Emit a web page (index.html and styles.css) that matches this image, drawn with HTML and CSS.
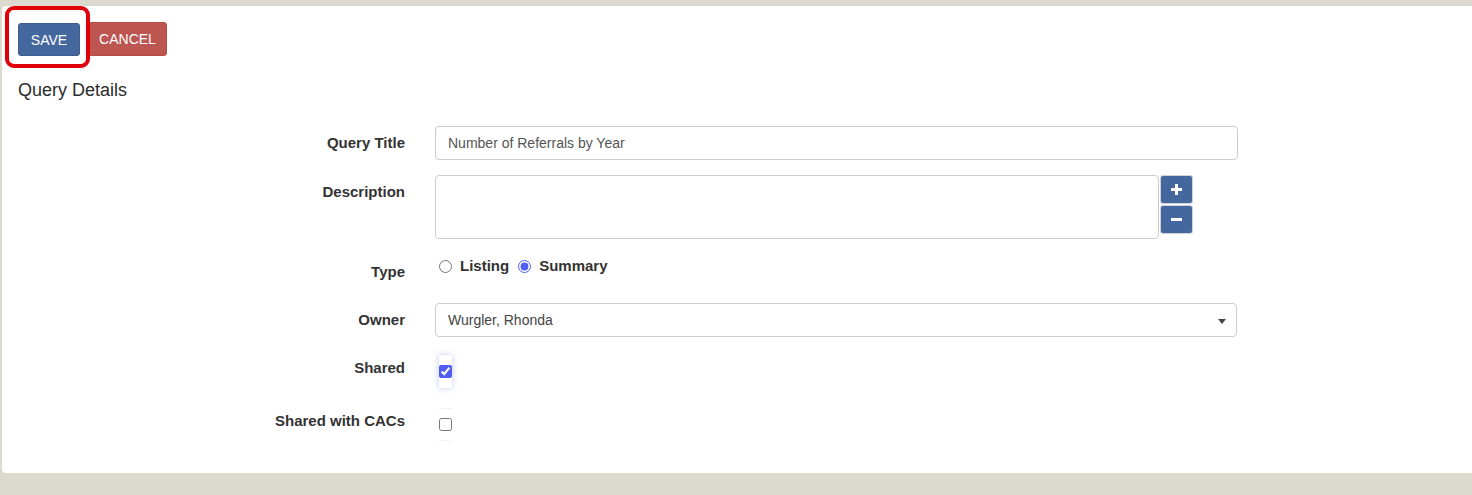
FILE: index.html
```html
<!DOCTYPE html>
<html>
<head>
<meta charset="utf-8">
<link rel="stylesheet" href="styles.css">
</head>
<body>
<div class="panel">
  <div class="toolbar">
    <button class="btn btn-save">SAVE</button>
    <button class="btn btn-cancel">CANCEL</button>
    <div class="highlight"></div>
  </div>
  <h2 class="section-title">Query Details</h2>
  <form class="form">
    <div class="row row-title">
      <label class="label">Query Title</label>
      <div class="field"><input class="input" type="text" value="Number of Referrals by Year"></div>
    </div>
    <div class="row row-desc">
      <label class="label">Description</label>
      <div class="field desc-field">
        <textarea class="textarea"></textarea>
        <div class="stepper">
          <button type="button" class="step">
            <svg width="11" height="11" viewBox="0 0 11 11"><path d="M4 0h3v4h4v3H7v4H4V7H0V4h4z" fill="#fff"/></svg>
          </button>
          <button type="button" class="step">
            <svg width="11" height="11" viewBox="0 0 11 11"><path d="M0 4h11v3H0z" fill="#fff"/></svg>
          </button>
        </div>
      </div>
    </div>
    <div class="row row-type">
      <label class="label">Type</label>
      <div class="field radios">
        <label class="radio"><input type="radio" name="t"> Listing</label>
        <label class="radio"><input type="radio" name="t" checked> Summary</label>
      </div>
    </div>
    <div class="row row-owner">
      <label class="label">Owner</label>
      <div class="field">
        <div class="select">Wurgler, Rhonda<span class="caret"></span></div>
      </div>
    </div>
    <div class="row row-shared">
      <label class="label">Shared</label>
      <div class="field">
        <div class="check-wrap focused"><input type="checkbox" class="check" checked></div>
      </div>
    </div>
    <div class="row row-cacs">
      <label class="label">Shared with CACs</label>
      <div class="field">
        <div class="check-wrap plain"><input type="checkbox" class="check"></div>
      </div>
    </div>
  </form>
</div>
</body>
</html>
```
FILE: styles.css
```css
* { box-sizing: border-box; }
html, body { margin: 0; padding: 0; }
body {
  background: #dcd9ce;
  font-family: "Liberation Sans", Arial, sans-serif;
  font-size: 14px;
  color: #333;
  height: 495px;
  overflow: hidden;
}
.panel {
  margin: 6px 0 0 2px;
  height: 467px;
  background: #fff;
  border-radius: 4px 0 0 4px;
  padding: 16px 0 0 0;
}
.toolbar {
  position: relative;
  display: flex;
  align-items: flex-start;
  padding-left: 16px;
  height: 34px;
}
.btn {
  font-family: "Liberation Sans", Arial, sans-serif;
  font-size: 14px;
  color: #fff;
  border: 1px solid transparent;
  border-radius: 3px;
  padding: 0;
  cursor: pointer;
}
.btn-save {
  background: #44679e;
  border-color: #3d5d8f;
  width: 62px;
  height: 33px;
  margin-top: 1px;
}
.btn-cancel {
  background: #bd5551;
  border-color: #b44c48;
  width: 79px;
  height: 34px;
  margin-left: 8px;
}
.highlight {
  position: absolute;
  left: 3px;
  top: -16px;
  width: 85px;
  height: 62px;
  border: 4px solid #e0000a;
  border-radius: 9px;
}
.section-title {
  margin: 22px 0 0 16px;
  font-size: 18px;
  font-weight: normal;
  color: #2b2b2b;
  line-height: 24px;
}
.form { margin-top: 24px; }
.row {
  display: grid;
  grid-template-columns: 403px 803px;
  column-gap: 30px;
  align-items: start;
}
.label {
  text-align: right;
  font-weight: bold;
  font-size: 15px;
  line-height: 20px;
  padding-top: 7px;
  color: #333;
}
.input, .textarea, .select {
  font-family: "Liberation Sans", Arial, sans-serif;
  font-size: 14px;
  color: #555;
  border: 1px solid #ccc;
  border-radius: 4px;
  background: #fff;
  width: 100%;
}
.input {
  height: 34px;
  padding: 0 12px;
  display: block;
}
.row-desc { margin-top: 15px; }
.desc-field { display: flex; }
.textarea {
  width: 724px;
  height: 64px;
  resize: none;
  display: block;
  margin: 0;
}
.stepper {
  display: flex;
  flex-direction: column;
  gap: 1px;
  margin-left: 1px;
  margin-top: 0;
}
.step {
  width: 33px;
  height: 29px;
  background: #44679e;
  border: 1px solid #d0d4da;
  border-radius: 3px;
  display: flex;
  align-items: center;
  justify-content: center;
  padding: 0;
}
.row-type { margin-top: 16px; height: 48px; }
.radios {
  display: flex;
  gap: 9px;
  padding-left: 4px;
  padding-top: 1px;
  line-height: 20px;
}
.radio {
  display: flex;
  align-items: center;
  font-weight: bold;
  font-size: 15px;
  color: #333;
}
.radio input {
  margin: 0 8px 0 0;
  width: 13px;
  height: 13px;
  accent-color: #4f5df0;
}
.row-owner { height: 34px; }
.select {
  height: 34px;
  padding: 0 12px;
  display: flex;
  align-items: center;
  position: relative;
  color: #444;
  width: 802px;
}
.caret {
  position: absolute;
  right: 10px;
  top: 15px;
  border-left: 4px solid transparent;
  border-right: 4px solid transparent;
  border-top: 5px solid #444;
}
.row-shared { margin-top: 14px; height: 53px; }
.check-wrap {
  width: 13px;
  margin-left: 4px;
  display: flex;
  justify-content: center;
}
.check-wrap.focused {
  margin-top: 4px;
  height: 33px;
  align-items: center;
  box-shadow: 0 0 6px rgba(79, 93, 240, 0.35);
  background: #fff;
}
.check-wrap.plain {
  margin-top: 4px;
  height: 33px;
  align-items: center;
  border-top: 1px solid #f1f1f1;
  border-bottom: 1px solid #f4f4f4;
}
.check {
  margin: 0;
  width: 13px;
  height: 13px;
  accent-color: #4f5df0;
}
```
